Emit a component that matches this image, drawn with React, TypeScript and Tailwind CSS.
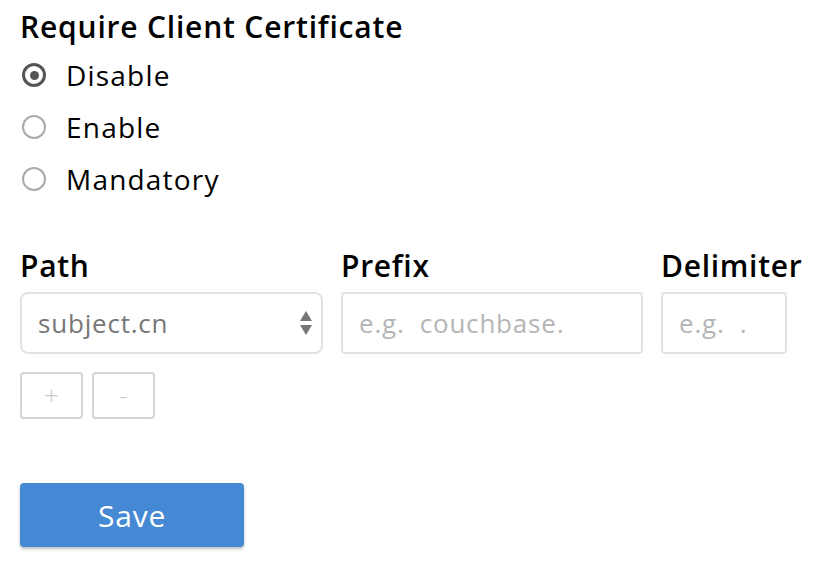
import { useState } from 'react'

const OPTIONS = ['Disable', 'Enable', 'Mandatory']

export default function App() {
  const [mode, setMode] = useState('Disable')

  return (
    <div className="min-h-[564px] bg-white pl-[20px] text-black"
      style={{ fontFamily: '"Open Sans", "Noto Sans", sans-serif' }}>

      {/* Title */}
      <div className="h-[49px] pt-[12px]">
        <h2 className="text-[30px] font-semibold leading-[30px] tracking-[0.8px]">Require Client Certificate</h2>
      </div>

      {/* Radios */}
      <div className="flex flex-col">
        {OPTIONS.map(o => (
          <label key={o} className="flex h-[52px] items-center gap-[20px] cursor-pointer"
            onClick={() => setMode(o)}>
            <span className={mode === o
              ? 'ml-[2px] flex h-[24px] w-[24px] items-center justify-center rounded-full border-[3px] border-[#555]'
              : 'ml-[2px] h-[24px] w-[24px] rounded-full border-2 border-[#aaa]'}>
              {mode === o && <span className="h-[9px] w-[9px] rounded-full bg-[#555]" />}
            </span>
            <span className="text-[28px] leading-none tracking-[1.2px]">{o}</span>
          </label>
        ))}
      </div>

      {/* Path / Prefix / Delimiter */}
      <div className="mt-[40px] flex gap-[18px]">
        <div className="flex w-[303px] flex-col">
          <div className="h-[47px] text-[30px] font-semibold leading-[42px] tracking-[0.7px]">Path</div>
          <div className="flex h-[62px] items-center justify-between rounded-[8px] border-2 border-[#e3e3e3] pl-[16px] pr-[8px]">
            <span className="text-[26px] tracking-[0.8px] text-[#777]">subject.cn</span>
            <svg width="14" height="26" viewBox="0 0 14 26" className="text-[#777]">
              <path d="M7 1 L13 11 L1 11 Z" fill="currentColor" />
              <path d="M1 15 L13 15 L7 25 Z" fill="currentColor" />
            </svg>
          </div>
        </div>
        <div className="flex w-[302px] flex-col">
          <div className="h-[47px] text-[30px] font-semibold leading-[42px] tracking-[0.7px]">Prefix</div>
          <input placeholder={'e.g.\u00a0 couchbase.'}
            className="h-[62px] rounded-[4px] border-2 border-[#e3e3e3] px-[16px] text-[26px] tracking-[0.8px] outline-none placeholder:text-[#b5b5b5]" />
        </div>
        <div className="flex w-[126px] flex-col">
          <div className="h-[47px] whitespace-nowrap text-[30px] font-semibold leading-[42px] tracking-[0.7px]">Delimiter</div>
          <input placeholder={'e.g.\u00a0 .'}
            className="h-[62px] w-[126px] rounded-[4px] border-2 border-[#e3e3e3] px-[16px] text-[26px] tracking-[0.8px] outline-none placeholder:text-[#b5b5b5]" />
        </div>
      </div>

      {/* Add / remove */}
      <div className="mt-[18px] flex gap-[9px]">
        <button className="flex h-[47px] w-[63px] items-center justify-center rounded-[4px] border-2 border-[#d4d4d4] text-[26px] font-light text-[#c8c8c8]">+</button>
        <button className="flex h-[47px] w-[63px] items-center justify-center rounded-[4px] border-2 border-[#d4d4d4] text-[26px] font-light text-[#c8c8c8]">-</button>
      </div>

      {/* Save */}
      <button className="mt-[64px] h-[64px] w-[224px] rounded-[4px] bg-[#4589d4] text-[30px] tracking-[0.8px] text-white shadow-[0_2px_3px_rgba(0,0,0,0.25)]">
        Save
      </button>
    </div>
  )
}
